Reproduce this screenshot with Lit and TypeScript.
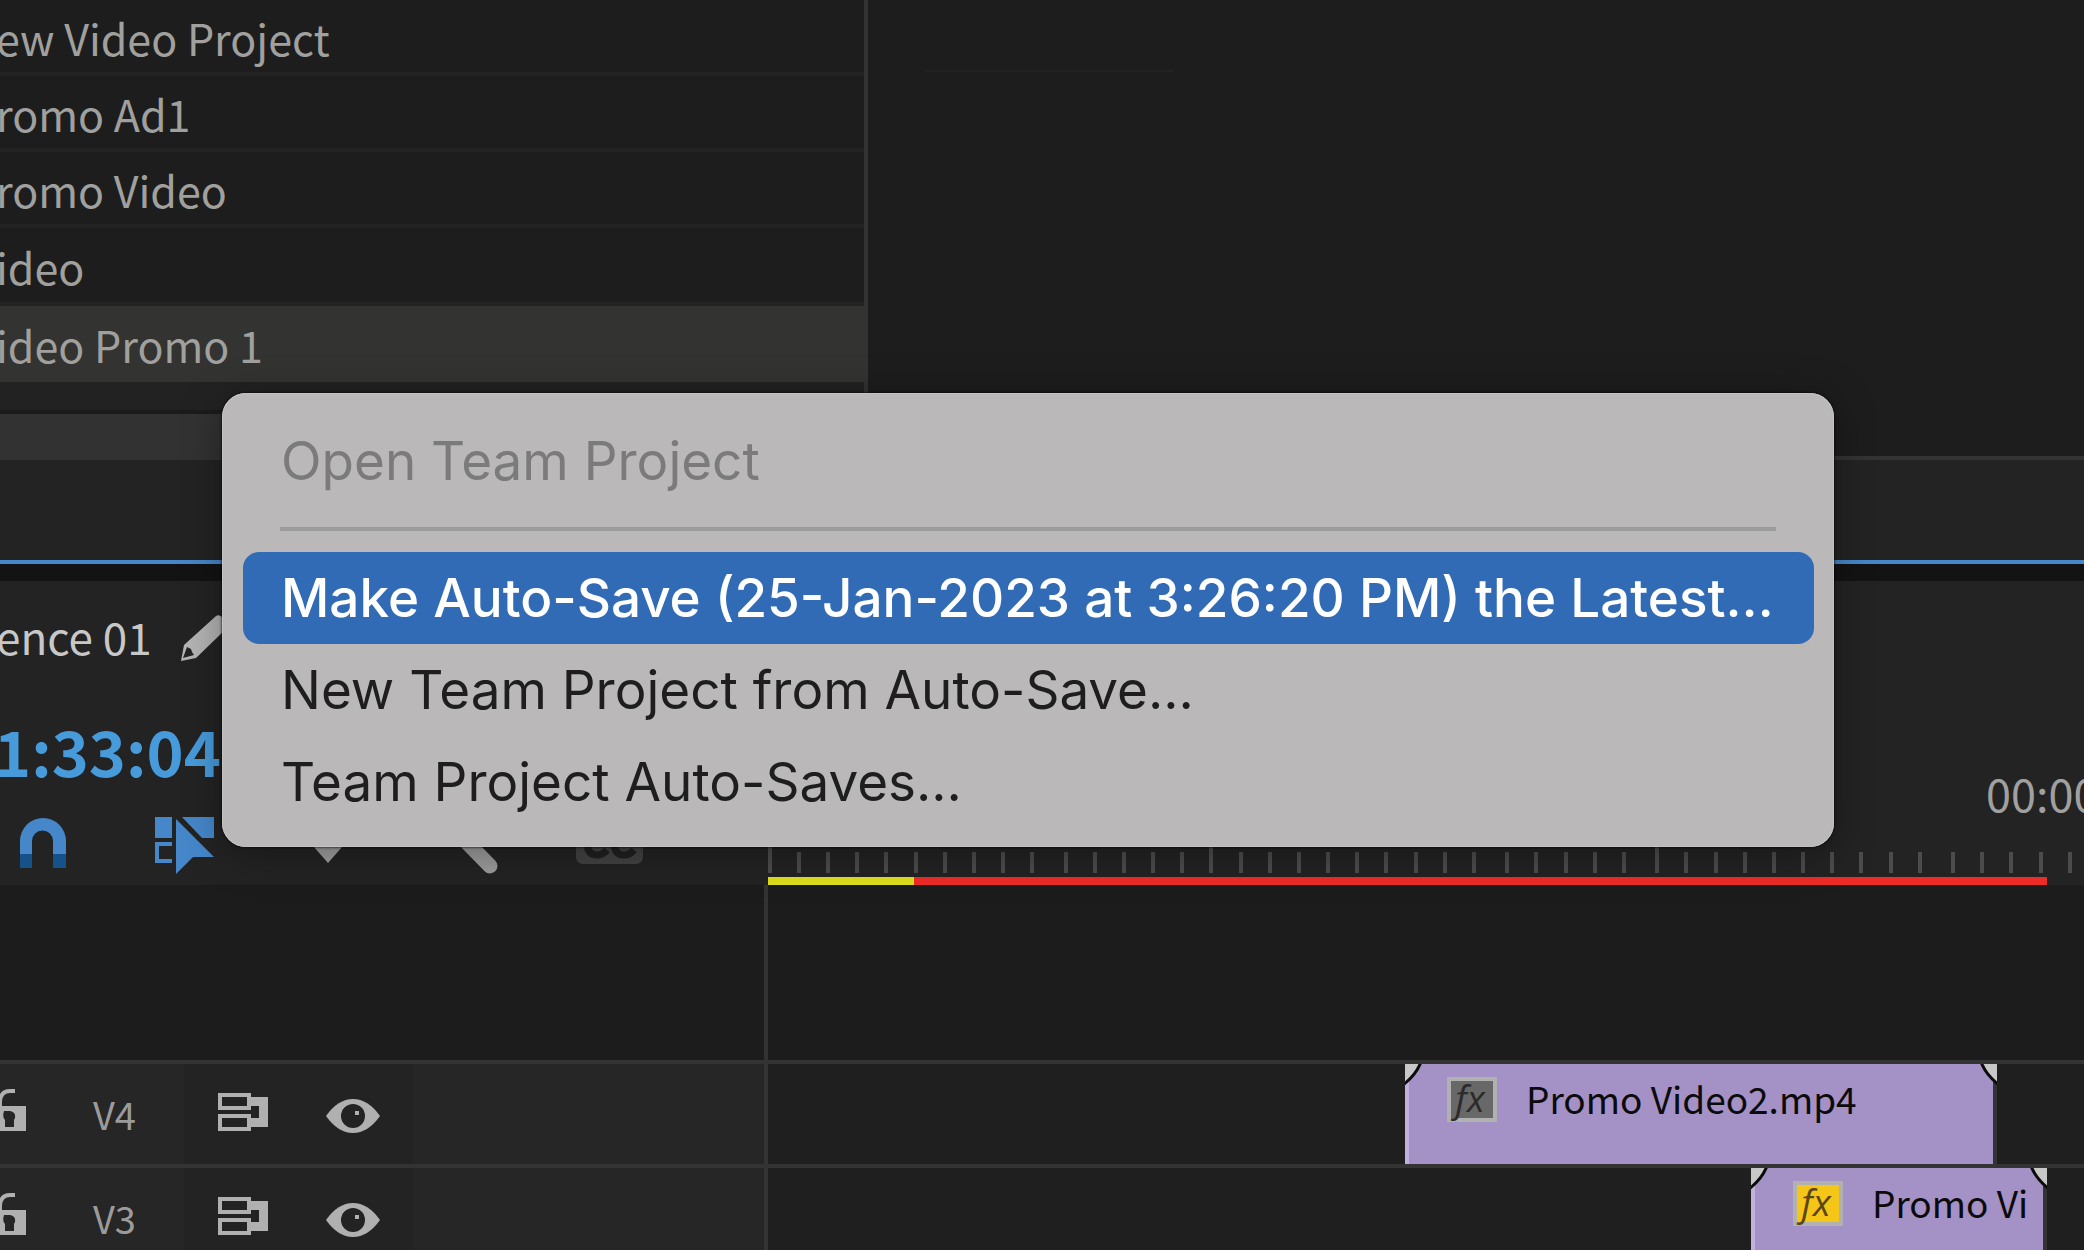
import { LitElement, html, css, svg } from "lit";
import { customElement } from "lit/decorators.js";

interface Row { name: string; selected?: boolean; }
interface Clip { name: string; left: number; width: number; active: boolean; }
interface Track { id: string; clip: Clip; }

const ROWS: Row[] = [
  { name: "ew Video Project" },
  { name: "romo Ad1" },
  { name: "romo Video" },
  { name: "ideo" },
  { name: "ideo Promo 1", selected: true },
];

const TRACKS: Track[] = [
  { id: "V4", clip: { name: "Promo Video2.mp4", left: 637, width: 592, active: false } },
  { id: "V3", clip: { name: "Promo Vi", left: 983, width: 296, active: true } },
];

// Marks along the ruler, in pixels from its start; every fifteenth one is long.
const MARKS = [
  0, 29, 58, 87, 116, 146, 175, 204, 233, 262, 296, 325, 354, 383, 412,
  441, 471, 500, 529, 558, 587, 616, 646, 675, 704, 737, 766, 796, 825, 854,
  887, 916, 946, 975, 1004, 1033, 1062, 1091, 1121, 1150, 1183, 1212, 1241, 1271, 1300,
];

const pencil = svg`<svg width="48" height="54" viewBox="0 -6 48 54"><path fill="#b4b4b4" fill-rule="evenodd" d="M0 46 3 30 35 1Q38-1 41 2L46 7Q48 10 46 13L15 43ZM6 32 2 43 13 40 11 37 10 34Z"/></svg>`;
const magnet = svg`<svg width="46" height="50" viewBox="0 0 46 50"><path fill="#4587c9" d="M0 36V23a23 23 0 0 1 46 0V36H33V23a10.500 10.500 0 0 0-21 0V36Z"/><path fill="#16528a" d="M0 36H12V50H0ZM33 36H46V50H33Z"/></svg>`;
const linked = svg`<svg width="60" height="53" viewBox="0 0 60 53" overflow="visible"><g fill="#4587c9"><path d="M0 0H17V21H0ZM27 0H59V21H47ZM21 2 59 40H38L21 57Z"/><path d="M0 25H17V29H4V42H17V46H0Z"/></g></svg>`;
const marker = svg`<svg width="30" height="40" viewBox="0 0 30 40"><path fill="#a0a0a0" d="M1 0H29V24L15 40 1 24Z"/></svg>`;
const wrench = svg`<svg width="60" height="62" viewBox="0 0 60 62"><path d="M12 14 51 54" stroke="#9c9c9c" stroke-width="15" stroke-linecap="round"/></svg>`;
const captions = svg`<svg width="67" height="42" viewBox="0 0 67 42"><rect width="67" height="42" rx="7" fill="#434343"/><path d="M31 28Q27 33 21 33 11 33 11 20T21 7Q27 7 31 12M58 28Q54 33 48 33 38 33 38 20T48 7Q54 7 58 12" fill="none" stroke="#202020" stroke-width="7"/></svg>`;
const lock = svg`<svg width="28" height="50" viewBox="0 0 28 50"><path d="M2 18V12Q3 2 12 2H17" fill="none" stroke="#b0b0b0" stroke-width="4"/><path fill="#b0b0b0" fill-rule="evenodd" d="M0 17H28V42H0ZM6 22H12Q18 23 17 29L16 31V38H7V31Q4 28 6 22Z"/></svg>`;
const sync = svg`<svg width="50" height="42" viewBox="0 0 50 42"><path fill="#b0b0b0" fill-rule="evenodd" d="M0 0H33V4H50V34H33V38H0V21H33V25H41V13H33V17H0ZM4 4V13H29V4ZM4 25V34H29V25Z"/></svg>`;
const eye = svg`<svg width="54" height="38" viewBox="0 -4 54 38"><path fill="#b0b0b0" d="M0 17Q12 0 27 0T54 17Q42 34 27 34T0 17Z"/><circle cx="27" cy="17" r="12" fill="#232323"/><rect x="29" y="12" width="4" height="4" fill="#b0b0b0"/></svg>`;
const corner = svg`<svg width="22" height="22" viewBox="0 0 22 22"><path fill="#c8c8c8" d="M0 0H16L0 20Z"/><path d="M16-2Q11 11-2 21" fill="none" stroke="#0b0b0b" stroke-width="3"/></svg>`;

@customElement("project-list")
export class ProjectList extends LitElement {
  static styles = css`
    :host { display: block; background: #1d1d1d; border-right: 4px solid #333; overflow: hidden; }
    .list { margin: 0; padding: 0; list-style: none; }
    .row { box-sizing: border-box; height: 76px; padding-top: 2px; border-bottom: 4px solid #232323; display: flex; align-items: center; font-size: 43px; line-height: 64px; white-space: pre; color: #a0a09e; }
    .row:nth-child(4) { height: 78px; }
    .name { margin-left: -4px; }
    .selected { background: #333331; border-bottom: 0; padding: 0; }
    .foot { height: 28px; background: #222; border-bottom: 4px solid #1b1b1b; }
    .bar { height: 46px; background: #323232; }
  `;
  render() {
    return html`<ul class="list">${ROWS.map((r) => html`<li class="row ${r.selected ? "selected" : ""}"><span class="name">${r.name}</span></li>`)}</ul>
      <div class="foot"></div><div class="bar"></div>`;
  }
}

@customElement("sequence-header")
export class SequenceHeader extends LitElement {
  static styles = css`
    :host { display: grid; grid-template-columns: 768px 1fr; height: 304px; background: #232323; overflow: hidden; }
    .tools { display: flex; flex-direction: column; }
    .title { display: flex; align-items: center; gap: 29px; height: 72px; margin: 19px 0 0 -4px; font-size: 44px; line-height: 72px; color: #c8c8c8; }
    .time { margin: 38px 0 0 -6px; height: 80px; font-size: 63px; line-height: 80px; font-weight: 700; color: #479bdb; }
    .icons { display: flex; align-items: center; height: 58px; margin-top: 24px; padding-left: 20px; }
    .tool { display: flex; padding: 0; border: 0; background: none; }
    .tool:nth-child(2) { margin-left: 89px; }
    .tool:nth-child(3) { margin-left: 98px; }
    .tool:nth-child(4) { margin-left: 96px; }
    .tool:nth-child(5) { margin-left: 77px; }
    .ruler { display: flex; flex-direction: column; justify-content: flex-end; min-width: 0; }
    .stamp { padding-left: 1218px; font-size: 45px; line-height: 64px; white-space: nowrap; color: #a0a0a0; }
    .ticks { display: block; width: 100%; height: 50px; }
    .render { display: flex; height: 8px; margin-top: 2px; }
    .yellow { width: 146px; background: #dfdf1c; }
    .red { width: 1133px; background: #ee2c27; }
  `;
  render() {
    return html`<div class="tools">
        <div class="title"><span>ence 01</span>${pencil}</div>
        <div class="time">1:33:04</div>
        <div class="icons">
          <button class="tool" aria-label="Snap">${magnet}</button>
          <button class="tool" aria-label="Linked selection">${linked}</button>
          <button class="tool" aria-label="Add marker">${marker}</button>
          <button class="tool" aria-label="Settings">${wrench}</button>
          <button class="tool" aria-label="Captions">${captions}</button>
        </div>
      </div>
      <div class="ruler">
        <div class="stamp">00:00</div>
        <svg class="ticks">${MARKS.map((x, i) => svg`<rect x=${x} y=${i % 15 ? 27 : 8} width="4" height=${i % 15 ? 21 : 40} fill="#4c4c4c"/>`)}</svg>
        <div class="render"><div class="yellow"></div><div class="red"></div></div>
      </div>`;
  }
}

@customElement("track-list")
export class TrackList extends LitElement {
  static styles = css`
    :host { display: block; }
    .track { display: grid; grid-template-columns: 764px 1fr; height: 100px; border-top: 4px solid #333; }
    .gap { display: grid; grid-template-columns: 764px 1fr; height: 175px; background: #1c1c1c; }
    .lane { border-left: 4px solid #333; background: #1f1f1f; overflow: hidden; min-width: 0; }
    .gap .lane { background: #1c1c1c; }
    .head { display: flex; background: #262626; }
    .name { display: flex; align-items: center; width: 184px; gap: 67px; font-size: 38px; line-height: 40px; color: #9b9b9b; }
    .options { display: flex; align-items: center; gap: 58px; width: 196px; padding-left: 34px; background: #232323; }
    .tool { display: flex; padding: 0; border: 0; background: none; }
    .name .tool { margin-left: -2px; }
    .clip { box-sizing: border-box; position: relative; display: flex; align-items: flex-start; gap: 29px; height: 100%; padding: 13px 0 0 38px; border-left: 4px solid #c1b1dc; border-right: 4px solid #333; background: #a491c6; color: #0b0b0b; font-size: 37px; line-height: 42px; white-space: nowrap; }
    .fx { box-sizing: border-box; display: flex; align-items: center; justify-content: center; width: 50px; height: 45px; padding: 0 4px 4px 0; border: 4px solid #b1b1b1; background: #686868; color: #2b2b2b; font-family: "Open Sans", "Noto Sans", sans-serif; font-size: 37px; line-height: 36px; font-style: italic; }
    .active { background: #f5c518; color: #5a4710; }
    .corner { position: absolute; top: 0; left: -4px; display: flex; }
    .right { left: auto; right: -4px; transform: scaleX(-1); }
  `;
  render() {
    return html`<div class="gap"><div></div><div class="lane"></div></div>
      ${TRACKS.map((t) => html`<div class="track">
        <div class="head">
          <div class="name"><button class="tool" aria-label="Lock ${t.id}">${lock}</button><span>${t.id}</span></div>
          <div class="options">
            <button class="tool" aria-label="Sync lock ${t.id}">${sync}</button>
            <button class="tool" aria-label="Show ${t.id}">${eye}</button>
          </div>
        </div>
        <div class="lane">
          <div class="clip" style="margin-left:${t.clip.left}px;width:${t.clip.width}px">
            <span class="corner">${corner}</span><span class="corner right">${corner}</span>
            <span class="fx ${t.clip.active ? "active" : ""}">fx</span><span>${t.clip.name}</span>
          </div>
        </div>
      </div>`)}`;
  }
}

@customElement("context-menu")
export class ContextMenu extends LitElement {
  static styles = css`
    :host { display: block; box-sizing: border-box; padding: 22px 20px 19px 21px; border-radius: 24px; background: #bab8b9; box-shadow: 0 0 2px 1px rgba(0, 0, 0, 0.5), 0 6px 40px rgba(0, 0, 0, 0.35), inset 0 0 0 1px #c5c4c5; font-family: Inter, "Liberation Sans", sans-serif; }
    .item { box-sizing: border-box; display: flex; align-items: center; width: 100%; height: 92px; padding: 0 0 0 38px; border: 0; border-radius: 16px; background: none; color: #1e1e1e; font: inherit; font-size: 53px; line-height: 68px; white-space: nowrap; text-align: left; }
    .item:disabled { color: #7c7b7c; }
    .current { background: #326bb5; color: #fff; font-weight: 500; }
    .line { height: 4px; margin: 20px 38px 21px 37px; border: 0; background: #9d9c9d; }
  `;
  render() {
    return html`<button class="item" disabled>Open Team Project</button>
      <hr class="line" />
      <button class="item current">Make Auto-Save (25-Jan-2023 at 3:26:20 PM) the Latest…</button>
      <button class="item">New Team Project from Auto-Save…</button>
      <button class="item">Team Project Auto-Saves…</button>`;
  }
}

@customElement("app-root")
export class AppRoot extends LitElement {
  static styles = css`
    :host { display: block; position: relative; height: 100vh; overflow: hidden; background: #1d1d1d; font-family: "Noto Sans CJK SC", "Noto Sans", sans-serif; }
    .top { display: grid; grid-template-columns: 868px 1fr; }
    .viewer { box-sizing: border-box; padding: 70px 0 0 58px; border-bottom: 4px solid #333; background: #1d1d1d; }
    .rule { width: 248px; height: 2px; background: #222; }
    .tabs { height: 100px; box-sizing: content-box; background: #232323; border-bottom: 4px solid #4587c9; }
    .gutter { height: 17px; background: #131313; }
    .menu { position: absolute; left: 222px; top: 393px; width: 1612px; }
  `;
  render() {
    return html`<div class="top"><project-list></project-list><div class="viewer"><div class="rule"></div></div></div>
      <div class="tabs"></div>
      <div class="gutter"></div>
      <sequence-header></sequence-header>
      <track-list></track-list>
      <context-menu class="menu"></context-menu>`;
  }
}
